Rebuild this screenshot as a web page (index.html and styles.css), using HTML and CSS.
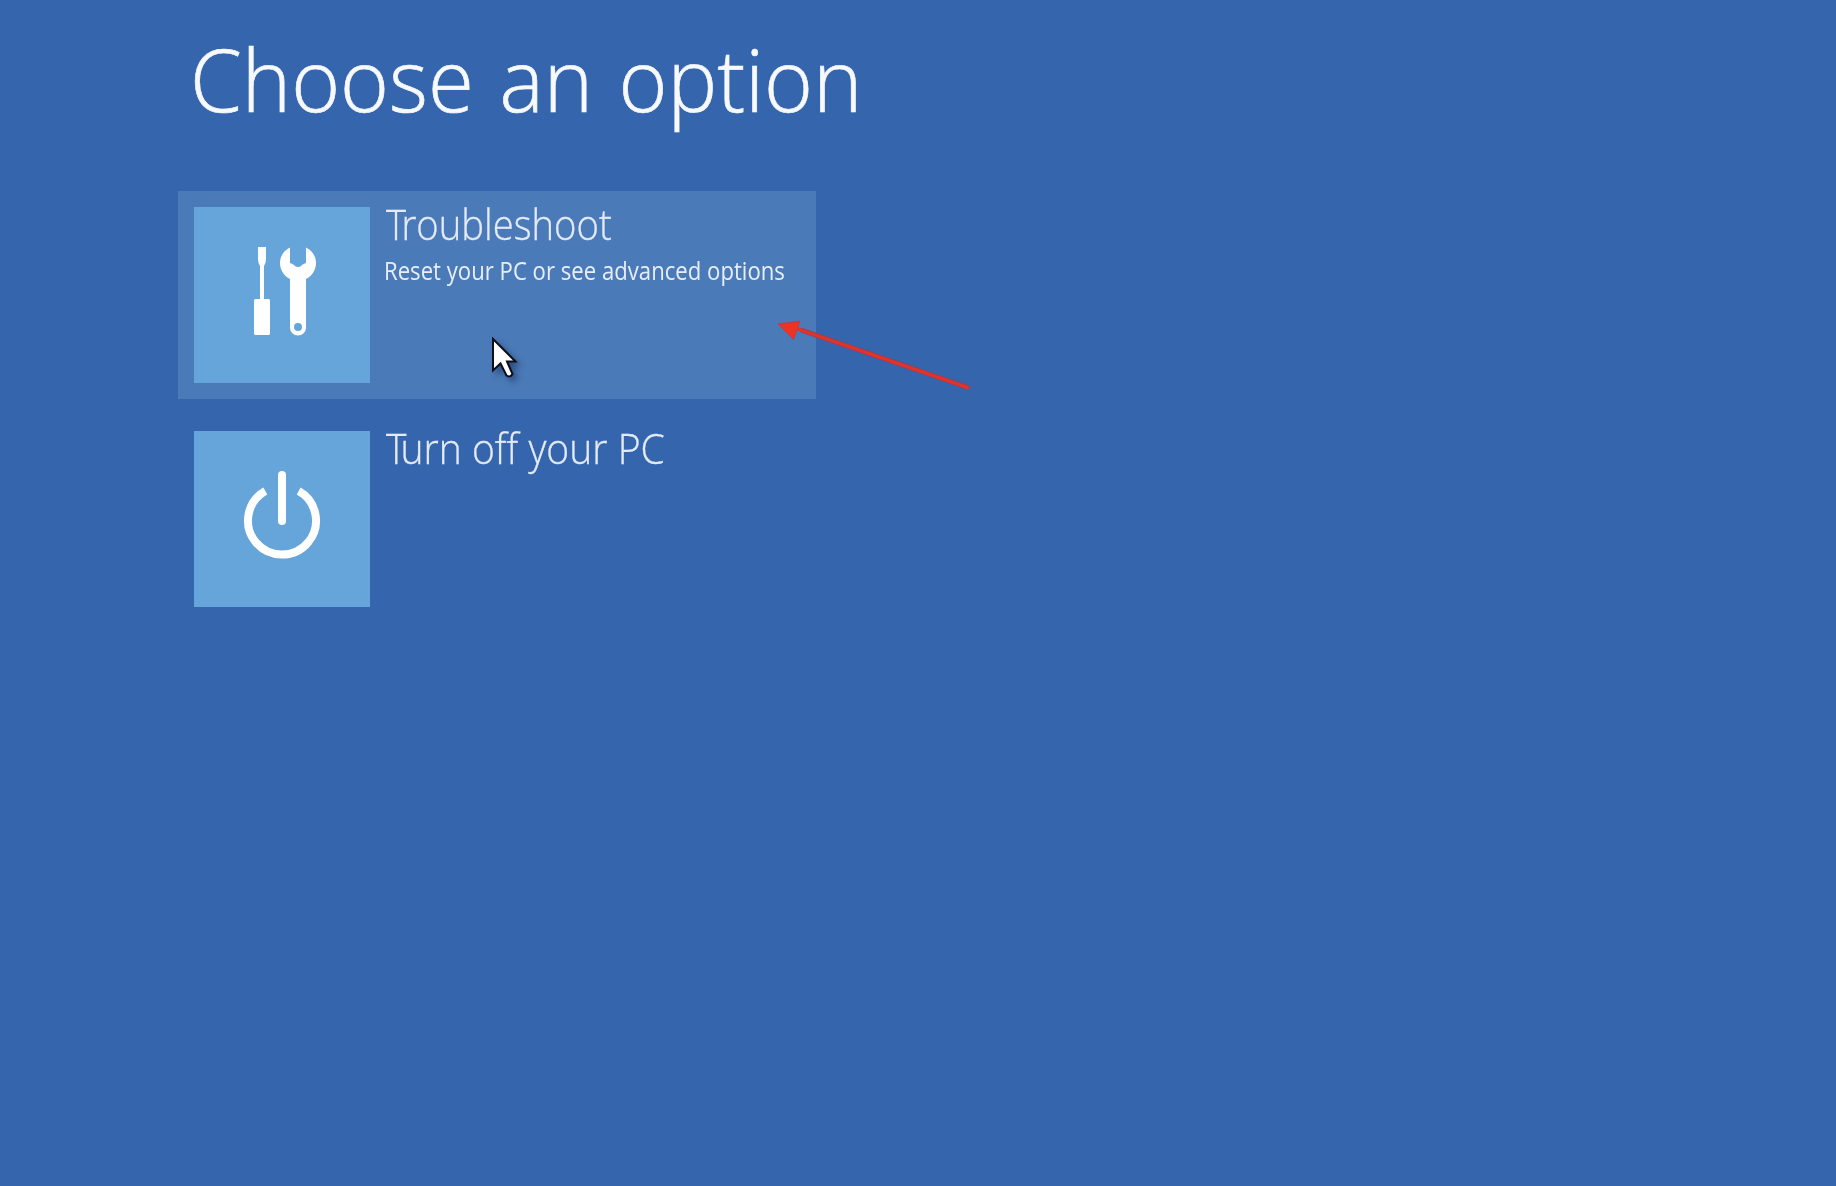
FILE: index.html
```html
<!DOCTYPE html>
<html lang="en">
<head>
<meta charset="utf-8">
<title>Choose an option</title>
<link rel="stylesheet" href="styles.css">
</head>
<body>
<main class="screen">
  <h1 class="heading">Choose an option</h1>
  <div class="options">
    <section class="option option-active">
      <div class="tile">
        <svg width="176" height="176" viewBox="0 0 176 176" fill="#fff">
          <path d="M64 40H72V52Q72 56 70 59V92H74.500Q76 92 76 93.500V126.500Q76 128 74.500 128H61.500Q60 128 60 126.500V93.500Q60 92 61.500 92H66V59Q64 56 64 52Z"/>
          <path fill-rule="evenodd" d="M96 40.500V56Q99.500 57 101 59Q104 61 107 59Q108.500 57 112 56V40.500C119 44 122 50 122 56C122 63 118 69 112 72V121A8 7.500 0 0 1 96 121V72C90 69 86 63 86 56C86 50 89 44 96 40.500ZM104 116A4 4 0 1 0 104 124A4 4 0 1 0 104 116Z"/>
        </svg>
      </div>
      <div class="label">
        <h2 class="name name-troubleshoot"><span class="initial">T</span>roubleshoot</h2>
        <p class="detail">Reset your PC or see advanced options</p>
      </div>
    </section>
    <section class="option">
      <div class="tile">
        <svg width="176" height="176" viewBox="0 0 176 176" fill="none" stroke="#fff" stroke-width="8">
          <path d="M71.300 60A34 34 0 1 0 104.700 60"/>
          <path d="M88 44V90" stroke-linecap="round"/>
        </svg>
      </div>
      <div class="label">
        <h2 class="name name-power"><span class="initial">T</span>urn off your PC</h2>
      </div>
    </section>
  </div>
</main>
<svg class="cursor" width="50" height="60" viewBox="0 0 50 60">
  <path d="M8 3V34.500L15.500 27.500L21.500 39.500Q25 42 27.500 38L22 25.500H30.500Z" fill="#fff" stroke="#0b0f18" stroke-width="2"/>
</svg>
<svg class="arrow" width="210" height="80" viewBox="0 0 210 80">
  <path d="M26 15L194.500 73" stroke="#a13a55" stroke-width="4.600"/>
  <path d="M20 13L194 73" stroke="#e03428" stroke-width="3.400"/>
  <path d="M3 9L25 6L18.500 24.500Z" fill="#ee3324" stroke="#bd3740" stroke-width=".7"/>
</svg>
</body>
</html>
```
FILE: styles.css
```css
* { box-sizing: border-box; }

body {
  margin: 0;
  height: 1186px;
  overflow: hidden;
  position: relative;
  background: #3465ad;
  color: #fff;
  font-family: "Open Sans", sans-serif;
}

.screen { padding: 28px 0 0 178px; }

h1, h2, p {
  margin: 0;
  white-space: nowrap;
  transform-origin: left;
}

.heading {
  margin-left: 12px;
  font-size: 87px;
  line-height: 100px;
  font-weight: 300;
  word-spacing: 4px;
  color: #f7f9fd;
  -webkit-text-stroke: .7px #f7f9fd;
  transform: scaleX(.96);
}

.options {
  display: flex;
  flex-direction: column;
  gap: 16px;
  width: 638px;
  margin-top: 63px;
}

.option {
  display: flex;
  gap: 16px;
  height: 208px;
  padding: 16px;
}

.option-active { background: #4b7ab8; }

.tile {
  flex: none;
  width: 176px;
  height: 176px;
  background: #66a5d9;
}

.tile svg { display: block; }

.label { margin-top: -8px; }

.name {
  font-size: 42px;
  line-height: 50px;
  font-weight: 300;
  color: #e4ebf6;
  -webkit-text-stroke: .3px #e4ebf6;
}

.name-troubleshoot { transform: scaleX(.91); }
.name-troubleshoot .initial { letter-spacing: -5px; }

.name-power { transform: scaleX(.93); }
.name-power .initial { letter-spacing: -6.5px; }

.detail {
  margin: 4px 0 0 -2px;
  font-size: 25px;
  line-height: 34px;
  color: #e8eef8;
  transform: scaleX(.886);
}

.cursor {
  position: absolute;
  left: 485px;
  top: 336px;
  filter: drop-shadow(4px 4px 3px rgba(10, 25, 60, .45));
}

.arrow {
  position: absolute;
  left: 775px;
  top: 315px;
}
```
